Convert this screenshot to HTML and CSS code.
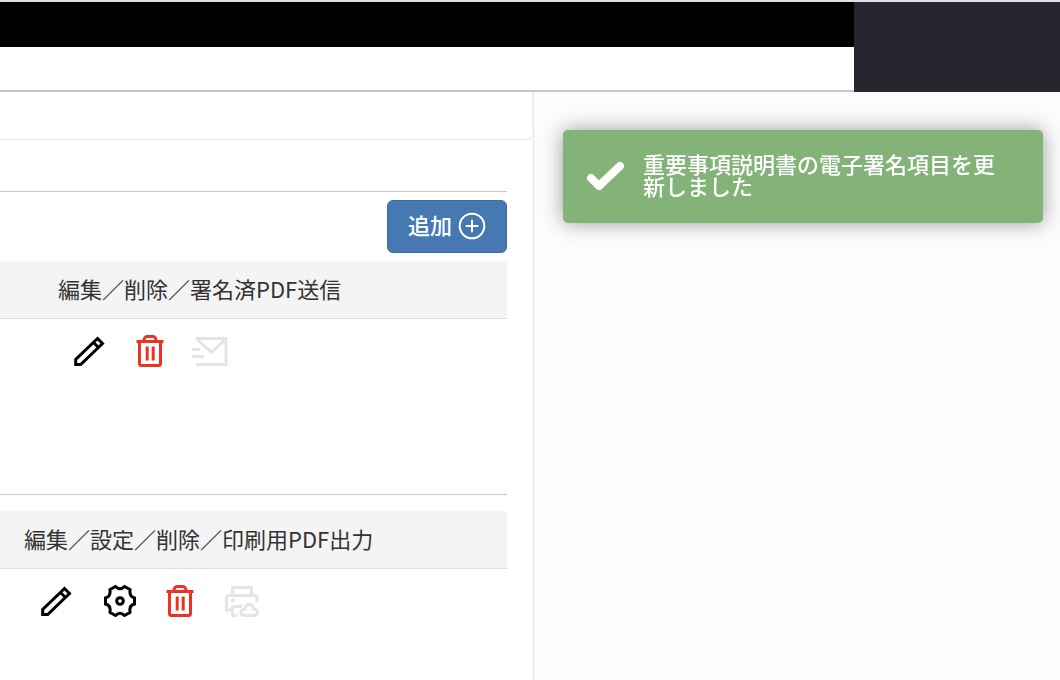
FILE: index.html
```html
<!DOCTYPE html>
<html lang="ja">
<head>
    <meta charset="UTF-8">
    <meta name="viewport" content="width=device-width, initial-scale=1.0">
    <title>電子署名</title>
    <link rel="stylesheet" href="styles.css">
</head>
<body>
    <header class="header">
        <div class="header-main">
            <div class="header-bar"></div>
        </div>
        <div class="header-side"></div>
    </header>

    <div class="layout">
        <main class="panel">
            <div class="panel-tab"></div>

            <section class="section section-sign">
                <div class="section-actions">
                    <button type="button" class="add-button">
                        <span>追加</span>
                        <svg viewBox="0 0 28 28" aria-hidden="true">
                            <circle cx="14" cy="14" r="12.3"/>
                            <path d="M14 8.5v11M8.5 14h11"/>
                        </svg>
                    </button>
                </div>
                <table class="table">
                    <thead>
                        <tr><th scope="col">編集／削除／署名済PDF送信</th></tr>
                    </thead>
                    <tbody>
                        <tr>
                            <td>
                                <div class="icons">
                                    <button type="button" class="icon-button" aria-label="編集">
                                        <svg viewBox="0 0 36 36">
                                            <path d="M4.7 31.500v-5L26.5 5.5l5 5L9.7 31.500zM22.500 9.500l5 5"/>
                                        </svg>
                                    </button>
                                    <button type="button" class="icon-button delete" aria-label="削除">
                                        <svg viewBox="0 0 36 36">
                                            <path d="M4.500 8.500h27M7.500 8.500v22q0 2 2 2h17q2 0 2-2v-22M12 8.500q0-5 3-5h6q3 0 3 5M15.200 13.500v14M21.200 13.500v14"/>
                                        </svg>
                                    </button>
                                    <button type="button" class="icon-button" aria-label="署名済PDF送信" disabled>
                                        <svg viewBox="0 0 36 36">
                                            <path d="M3 5.500h30v26H3M4 6l14.500 13.500L32.500 6M-1 16.500h8M-1 23.500h12"/>
                                        </svg>
                                    </button>
                                </div>
                            </td>
                        </tr>
                    </tbody>
                </table>
            </section>

            <section class="section section-print">
                <table class="table">
                    <thead>
                        <tr><th scope="col">編集／設定／削除／印刷用PDF出力</th></tr>
                    </thead>
                    <tbody>
                        <tr>
                            <td>
                                <div class="icons">
                                    <button type="button" class="icon-button" aria-label="編集">
                                        <svg viewBox="0 0 36 36">
                                            <path d="M4.7 31.500v-5L26.5 5.5l5 5L9.7 31.500zM22.500 9.500l5 5"/>
                                        </svg>
                                    </button>
                                    <button type="button" class="icon-button" aria-label="設定">
                                        <svg viewBox="-2 0 36 36">
                                            <path d="M13.500 3.500q4.500 4.500 9 0l5.500 3q-1 7.500 4.500 8.500v6q-5.500 1-4.500 8.500l-5.500 3q-4.500-4.500-9 0l-5.500-3q1-7.500-4.500-8.500v-6q5.500-1 4.500-8.500z"/>
                                            <circle cx="18" cy="18" r="3.300"/>
                                        </svg>
                                    </button>
                                    <button type="button" class="icon-button delete" aria-label="削除">
                                        <svg viewBox="0 0 36 36">
                                            <path d="M4.500 8.500h27M7.500 8.500v22q0 2 2 2h17q2 0 2-2v-22M12 8.500q0-5 3-5h6q3 0 3 5M15.200 13.500v14M21.200 13.500v14"/>
                                        </svg>
                                    </button>
                                    <button type="button" class="icon-button" aria-label="印刷用PDF出力" disabled>
                                        <svg viewBox="0 0 36 36">
                                            <path d="M8.500 12V4.500h19V12M8.500 27H2.500V15q0-2.500 2.500-2.500h25.500q2.500 0 2.500 2.500v4M7 17.500h4M18 23.500H8.500v9h5M21 32.500c-5.500 0-5.500-6 0-6.500 1-6.500 9-5.500 8.500 0 5.500 0 5 6.500 0 6.500z"/>
                                        </svg>
                                    </button>
                                </div>
                            </td>
                        </tr>
                    </tbody>
                </table>
            </section>
        </main>
        <aside class="aside"></aside>
    </div>

    <div class="toast" role="status">
        <svg viewBox="0 0 40 32" aria-hidden="true">
            <path d="M4 17l8 8L33 5"/>
        </svg>
        <p>重要事項説明書の電子署名項目を更新しました</p>
    </div>
</body>
</html>
```

FILE: styles.css
```css
* {
    box-sizing: border-box;
}
body {
    margin: 0;
    min-height: 100vh;
    display: flex;
    flex-direction: column;
    background: #fcfcfc;
    color: #333;
    font-family: "Noto Sans CJK JP", sans-serif;
    font-size: 22px;
    line-height: 32px;
}

/* header */
.header {
    display: flex;
    height: 92px;
    border-top: 2px solid #dfdfeb;
}
.header-main {
    flex: 1;
    background: #fff;
    border-bottom: 2px solid #c8c8cc;
}
.header-bar {
    height: 45px;
    background: #000;
}
.header-side {
    width: 206px;
    background: #28252f;
}

/* layout */
.layout {
    flex: 1;
    display: flex;
}
.panel {
    flex: 1;
    background: #fff;
    border-right: 1px solid #e6e6e6;
}
.aside {
    width: 526px;
}
.panel-tab {
    height: 48px;
    border-right: 1px solid #f4f4f6;
    border-bottom: 1px solid #e9e9ec;
    border-bottom-right-radius: 6px;
}
.section {
    margin-right: 26px;
    border-top: 1px solid #c8c8c8;
}
.section-sign {
    min-height: 303px;
    margin-top: 51px;
    padding-top: 8px;
}
.section-print {
    padding-top: 16px;
}
.section-actions {
    display: flex;
    justify-content: flex-end;
    margin-bottom: 8px;
}
.add-button {
    display: flex;
    align-items: center;
    justify-content: center;
    gap: 6px;
    width: 120px;
    height: 53px;
    padding: 0 0 1px;
    background: #4679b2;
    border: 1px solid #3c6ca4;
    border-radius: 6px;
    color: #fff;
    font: inherit;
    font-weight: 500;
    cursor: pointer;
}
.add-button span {
    padding-bottom: 4px;
}
.add-button svg {
    width: 28px;
    height: 28px;
    fill: none;
    stroke: currentColor;
    stroke-width: 2;
    stroke-linecap: round;
}

/* tables */
.table {
    width: 100%;
    border-collapse: separate;
    border-spacing: 0;
}
.table th {
    height: 58px;
    padding: 0 24px 4px;
    background: #f4f4f4;
    border-bottom: 1px solid #ddd;
    font-weight: 400;
    text-align: left;
}
.table td {
    padding: 14px 38px;
}
.section-sign th {
    padding-left: 58px;
}
.section-sign td {
    padding-left: 71px;
}
.icons {
    display: flex;
    gap: 25px;
}
.section-print .icons {
    gap: 26px;
}
.icon-button {
    width: 36px;
    height: 36px;
    padding: 0;
    background: none;
    border: 0;
    color: #000;
    cursor: pointer;
}
.icon-button svg {
    display: block;
    width: 36px;
    height: 36px;
    overflow: visible;
    fill: none;
    stroke: currentColor;
    stroke-width: 3;
}
.icon-button.delete {
    color: #ea3323;
}
.icon-button:disabled {
    color: #e4e4e4;
    cursor: default;
}

/* toast */
.toast {
    position: fixed;
    top: 130px;
    right: 17px;
    display: flex;
    align-items: center;
    gap: 16px;
    width: 480px;
    height: 93px;
    padding: 0 36px 0 24px;
    background: #84b37a;
    border-radius: 5px;
    box-shadow: 0 0 20px #999;
    color: #fff;
    font-weight: 500;
    line-height: 22px;
}
.toast svg {
    flex: none;
    width: 40px;
    height: 32px;
    fill: none;
    stroke: currentColor;
    stroke-width: 8;
    stroke-linecap: round;
    stroke-linejoin: round;
}
.toast p {
    margin: 0;
    padding-bottom: 6px;
}
```
